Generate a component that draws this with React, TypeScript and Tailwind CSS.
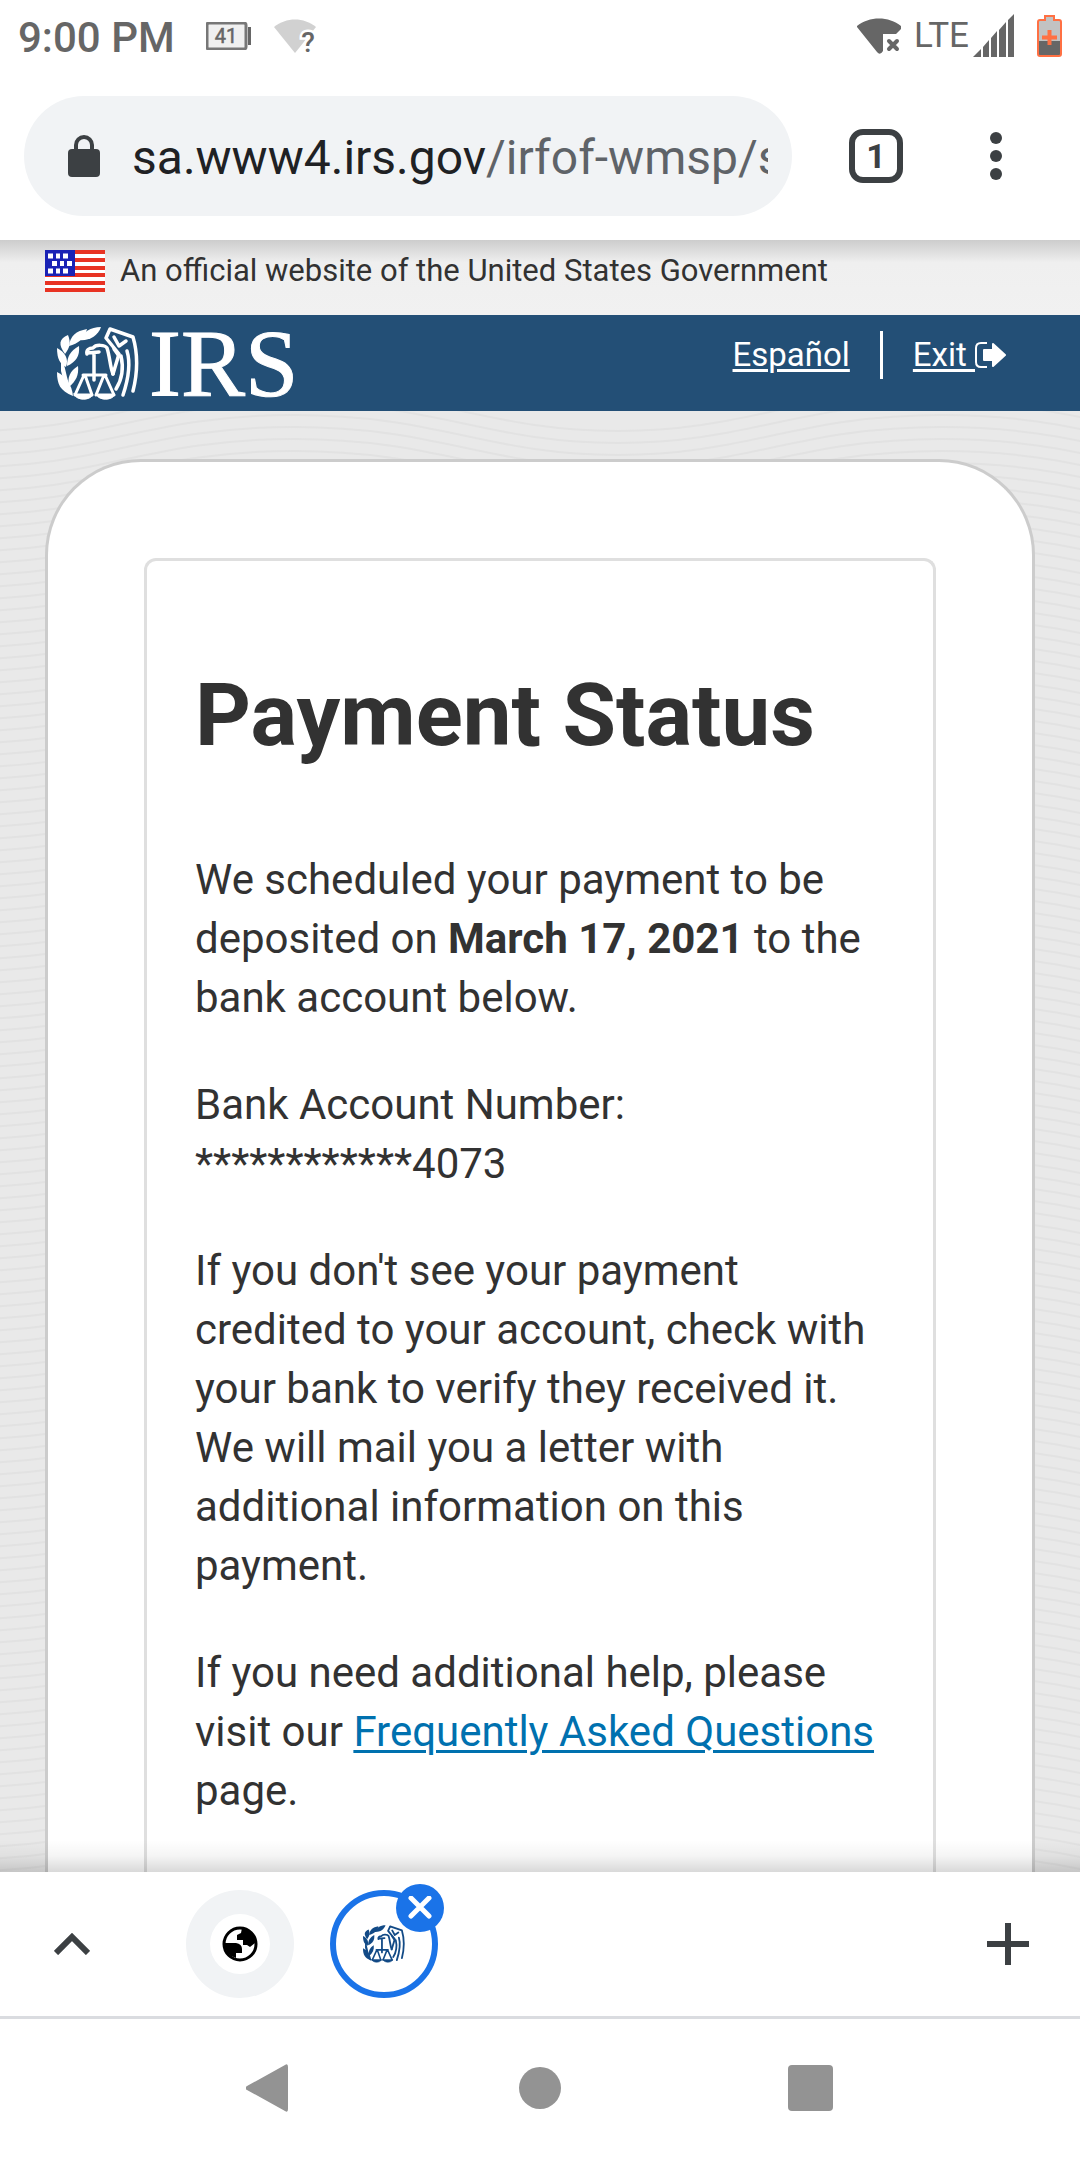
const WAVE_ROWS = Array.from({ length: 130 }, (_, i) => i * 12);

// Eagle, scales and laurel mark, used in the site header and on the browser tab
function EagleMark({ className }: { className?: string }) {
    return (
        <svg viewBox="0 0 82 73" className={className} fill="none" stroke="currentColor" strokeLinecap="round" strokeLinejoin="round" aria-hidden="true">
            <g fill="currentColor" stroke="none">
                <path d="M11 8 C2 12 1 17 8 27 C13 20 14 16 11 8Z" />
                <path d="M30 2 C19 4 13 9 12 19 C21 17 28 11 30 2Z" />
                <path d="M44 0 C33 0 27 5 22 13 C32 14 41 9 44 0Z" />
                <path d="M0 21 C0 32 3 37 9 40 C12 32 8 25 0 21Z" />
                <path d="M22 19 C13 24 10 30 10 39 C19 35 23 29 22 19Z" />
                <path d="M0 45 C0 57 3 64 16 69 C15 58 9 49 0 45Z" />
                <path d="M21 39 C13 44 10 50 12 60 C19 54 22 48 21 39Z" />
                <path d="M4 25 L10 50 L15 68 L9 63 L4 44Z" />
            </g>
            <path strokeWidth="3.500" d="M30 27 C29 23 32 21 36 21 C39 17 48 18 50 21 C53 30 53 40 56 47 M30 26 L42 25 M37 27 V53" />
            <path strokeWidth="3" d="M26 48 H49 M27 48 L18 68 M28 48 L35 68 M47 48 L39 68 M48 48 L57 68" />
            <path fill="currentColor" strokeWidth="1" d="M17 67 H36 C34 74 19 74 17 67Z M39 67 H58 C56 74 41 74 39 67Z" />
            <path strokeWidth="3.500" d="M56 47 L62 27 L49 11 L53 2 L76 10 C81 27 81 44 76 64" />
            <path strokeWidth="3.500" d="M57 10 L62 19 L69 14 M57 22 L62 29 M70 24 C74 37 71 53 66 68 M64 29 C67 42 64 54 59 62" />
        </svg>
    );
}

function StatusBar() {
    return (
        <header className="flex h-[72px] items-center justify-between pr-[18px] pl-[18px] text-[#666]">
            <div className="flex items-center">
                <span className="pt-1 text-[42px] leading-[60px] font-medium">9:00 PM</span>
                <svg viewBox="0 0 46 28" className="ml-[31px] h-7 w-[46px]" aria-label="Battery 41%">
                    <rect x="1" y="1" width="39" height="26" rx="2" fill="#f0f0f0" stroke="#777" strokeWidth="3" />
                    <rect x="42" y="5" width="3" height="18" fill="#666" />
                    <text x="20" y="21" fontSize="20" fontFamily="Roboto, sans-serif" textAnchor="middle" fill="#666" stroke="#666" strokeWidth="0.5">41</text>
                </svg>
                <svg viewBox="0 0 46 40" className="ml-5 h-10 w-[46px]" aria-hidden="true">
                    <path d="M2 11 C14 1 32 1 44 11 L23 37Z" fill="#d1d1d1" />
                    <text x="36" y="36" fontSize="28" fontWeight="500" fontFamily="Roboto, sans-serif" textAnchor="middle" fill="#666" stroke="#fff" strokeWidth="5" paintOrder="stroke">?</text>
                </svg>
            </div>
            <div className="flex items-center">
                <svg viewBox="0 0 46 38" className="h-[38px] w-[46px]" aria-hidden="true">
                    <path d="M1 9 C13 -1 33 -1 45 9 V12 L40 17 H27 V34 Q24 39 21 35 L1 10Z" fill="#666" />
                    <path d="M33 24 L41 32 M41 24 L33 32" stroke="#666" strokeWidth="4" strokeLinecap="round" />
                </svg>
                <span className="ml-3 text-[35px] leading-[72px]">LTE</span>
                <svg viewBox="0 0 42 44" className="ml-1 h-11 w-[42px]" fill="#666" aria-hidden="true">
                    <path d="M0 43 L8 35 V43Z M10 33 L16 26 V43 H10Z M18 24 L24 17 V43 H18Z M26 16 L33 8 V43 H26Z M35 6 L41 0 V43 H35Z" />
                </svg>
                <svg viewBox="0 0 25 44" className="ml-[22px] h-11 w-[25px]" aria-hidden="true">
                    <path d="M2 6 H7 V2 H18 V6 H23 V42 H2Z" fill="#c2c2c2" />
                    <path d="M2 27 H23 V42 H2Z" fill="#666" />
                    <path d="M3 6 H8 V2 H17 V6 H22 Q24 6 24 8 V40 Q24 42 22 42 H3 Q1 42 1 40 V8 Q1 6 3 6Z" fill="none" stroke="#ff7043" strokeWidth="2" />
                    <path d="M12.500 16 V31 M5 23.500 H20" stroke="#ff7043" strokeWidth="4" />
                </svg>
            </div>
        </header>
    );
}

function AddressBar() {
    return (
        <div className="flex h-42 items-start pt-6 pl-6">
            <div className="flex h-30 min-w-0 flex-1 items-center rounded-full bg-[#f1f3f5] pr-6 pl-11">
                <svg viewBox="0 0 32 42" className="h-[42px] w-8 shrink-0" aria-hidden="true">
                    <rect y="14" width="32" height="28" rx="4" fill="#3c4043" />
                    <path d="M8 16 V10 A8 8 0 0 1 24 10 V16" fill="none" stroke="#3c4043" strokeWidth="4" />
                </svg>
                <div className="ml-8 overflow-hidden pt-1 text-[48px] leading-[72px] whitespace-nowrap text-[#202124]">
                    sa.www4.irs.gov<span className="text-[#5f6368]">/irfof-wmsp/s</span>
                </div>
            </div>
            <button className="mt-[33px] ml-[57px] flex h-[54px] w-[54px] shrink-0 items-center justify-center rounded-[14px] border-6 border-[#3c4043] text-[34px] leading-none font-bold text-[#3c4043]" aria-label="Open tabs">
                1
            </button>
            <button className="mt-9 mr-[78px] ml-[87px] flex flex-col gap-1.5" aria-label="Menu">
                <span className="h-3 w-3 rounded-full bg-[#3c4043]" />
                <span className="h-3 w-3 rounded-full bg-[#3c4043]" />
                <span className="h-3 w-3 rounded-full bg-[#3c4043]" />
            </button>
        </div>
    );
}

function Flag() {
    return (
        <svg viewBox="0 0 60 42" className="h-[42px] w-[60px]" aria-hidden="true">
            <rect width="60" height="42" fill="#fff" />
            {[0, 8, 16, 23, 31, 38].map((y) => (
                <rect key={y} y={y} width="60" height="4" fill="#e83323" />
            ))}
            <rect width="30" height="26" fill="#1a23b5" />
            <path d="M3 6h5m3 0h4m3 0h5M7 13.500h5m3 0h4m3 0h5M3 21h5m3 0h4m3 0h5" stroke="#fff" strokeWidth="5" />
        </svg>
    );
}

function SiteHeader() {
    return (
        <>
            <div className="flex h-[75px] items-start bg-linear-to-b from-[#cdcdcd] via-[#efefef] via-30% to-[#f1f1f1] pt-[10px] pl-[45px]">
                <Flag />
                <span className="ml-[15px] text-[31px] leading-[42px]">An official website of the United States Government</span>
            </div>
            <div className="flex h-24 items-start justify-between bg-[#234f76] pr-[74px] pl-[57px] text-white">
                <div className="flex items-start pt-3">
                    <EagleMark className="h-[73px] w-[82px]" />
                    <span className="ml-2.5 font-['Liberation_Serif',serif] text-[96px] leading-[74px] [-webkit-text-stroke:1px_white]">IRS</span>
                </div>
                <nav className="flex items-center pt-4 text-[33px] leading-12">
                    <a href="#es" className="underline decoration-3 underline-offset-3">Español</a>
                    <span className="mx-[30px] h-12 w-[3px] bg-white" />
                    <a href="#exit" className="flex items-center underline decoration-3 underline-offset-3">
                        <span className="whitespace-pre">Exit </span>
                        <svg viewBox="0 0 31 26" className="h-[26px] w-[31px]" fill="none" stroke="#fff" aria-hidden="true">
                            <path d="M12 1 H6 Q1 1 1 6 V20 Q1 25 6 25 H12" strokeWidth="2" />
                            <path d="M9 8 H18 V2 L30 13 L18 24 V18 H9Z" fill="#fff" strokeWidth="2" strokeLinejoin="round" />
                        </svg>
                    </a>
                </nav>
            </div>
        </>
    );
}

function Waves() {
    return (
        <svg className="absolute inset-0 h-full w-full" aria-hidden="true">
            <g fill="none" stroke="#e2e2e2" strokeWidth="2">
                {WAVE_ROWS.map((y) => (
                    <path key={y} d={`M-30 ${y + 20} C100 ${y + 20} 150 ${y - 20} 294 ${y - 20} S488 ${y + 20} 618 ${y + 20} S798 ${y - 20} 942 ${y - 20} S1136 ${y + 20} 1266 ${y + 20}`} />
                ))}
            </g>
        </svg>
    );
}

function PaymentStatus() {
    return (
        <main className="relative flex flex-1 flex-col overflow-hidden bg-[#e9e9e9] px-[45px] pt-12">
            <Waves />
            <section className="relative flex flex-1 flex-col rounded-t-[96px] border-3 border-b-0 border-[#ccc] bg-white px-24 pt-24">
                <div className="flex-1 rounded-t-xl border-3 border-b-0 border-[#dfdfdf] px-12 pt-24">
                    <h1 className="text-[87px] leading-[116px] font-bold">Payment Status</h1>
                    <div className="mt-[77px] space-y-12 text-[42px] leading-[59px]">
                        <p>
                            We scheduled your payment to be deposited on <b>March 17, 2021</b> to the bank account below.
                        </p>
                        <p>
                            Bank Account Number:
                            <br />
                            ************4073
                        </p>
                        <p>
                            If you don't see your payment credited to your account, check with your bank to verify they received it. We will mail you a letter with additional information on this payment.
                        </p>
                        <p>
                            If you need additional help, please visit our{" "}
                            <a href="#faq" className="text-[#0071af] underline decoration-3 underline-offset-4">Frequently Asked Questions</a>{" "}
                            page.
                        </p>
                    </div>
                </div>
            </section>
            <div className="absolute inset-x-0 bottom-0 h-8 bg-linear-to-t from-black/15 via-black/4 to-transparent" />
        </main>
    );
}

function TabStrip() {
    return (
        <div className="flex h-[147px] shrink-0 items-center border-b-3 border-[#dadce0] pr-[51px] pl-[54px]">
            <button aria-label="Show tabs">
                <svg viewBox="0 0 36 22" className="h-[22px] w-9" fill="none" stroke="#3c4043" strokeWidth="6" aria-hidden="true">
                    <path d="M2 20 L18 4 L34 20" />
                </svg>
            </button>
            <button className="ml-24 flex h-27 w-27 items-center justify-center rounded-full bg-[#f1f3f5]" aria-label="Web page tab">
                <span className="flex h-15 w-15 items-center justify-center rounded-full bg-white">
                    <svg viewBox="0 0 36 36" className="h-9 w-9" aria-hidden="true">
                        <circle cx="18" cy="18" r="16" fill="#fff" stroke="#000" strokeWidth="3" />
                        <path d="M20 2 L19 7 L15 9 V14 H21 V19 H25 L28 21 L33 17 Q34 7 20 2Z M2 17 H14 Q20 18 20 23 V27 H14 V32 Q3 29 2 17Z" />
                    </svg>
                </span>
            </button>
            <div className="relative ml-9">
                <button className="flex h-27 w-27 items-center justify-center rounded-full border-6 border-[#1a73e8] text-[#124a86]" aria-label="IRS tab">
                    <EagleMark className="h-[38px] w-[42px]" />
                </button>
                <button className="absolute -top-1.5 -right-1.5 flex h-12 w-12 items-center justify-center rounded-full bg-[#1a73e8]" aria-label="Close tab">
                    <svg viewBox="0 0 24 24" className="h-6 w-6" stroke="#fff" strokeWidth="5" strokeLinecap="round" aria-hidden="true">
                        <path d="M3 2 L21 20 M21 2 L3 20" />
                    </svg>
                </button>
            </div>
            <button className="ml-auto" aria-label="New tab">
                <svg viewBox="0 0 42 42" className="h-[42px] w-[42px]" stroke="#3c4043" strokeWidth="6" aria-hidden="true">
                    <path d="M21 0 V42 M0 21 H42" />
                </svg>
            </button>
        </div>
    );
}

function NavigationBar() {
    return (
        <footer className="grid h-[141px] shrink-0 grid-cols-3 place-items-center px-[12.5%] pb-[3px]">
            <button aria-label="Back">
                <svg viewBox="3 0 48 48" className="h-12 w-12" fill="#939393" aria-hidden="true">
                    <path d="M42 1 Q45 -1 45 3 V45 Q45 49 42 47 L4 26 Q1 24 4 22Z" />
                </svg>
            </button>
            <button className="h-[42px] w-[42px] rounded-full bg-[#939393]" aria-label="Home" />
            <button className="h-[46px] w-[45px] rounded bg-[#939393]" aria-label="Recent apps" />
        </footer>
    );
}

export default function App() {
    return (
        <div className="flex min-h-screen flex-col bg-white font-['Roboto',sans-serif] text-[#323232]">
            <StatusBar />
            <AddressBar />
            <SiteHeader />
            <PaymentStatus />
            <TabStrip />
            <NavigationBar />
        </div>
    );
}
